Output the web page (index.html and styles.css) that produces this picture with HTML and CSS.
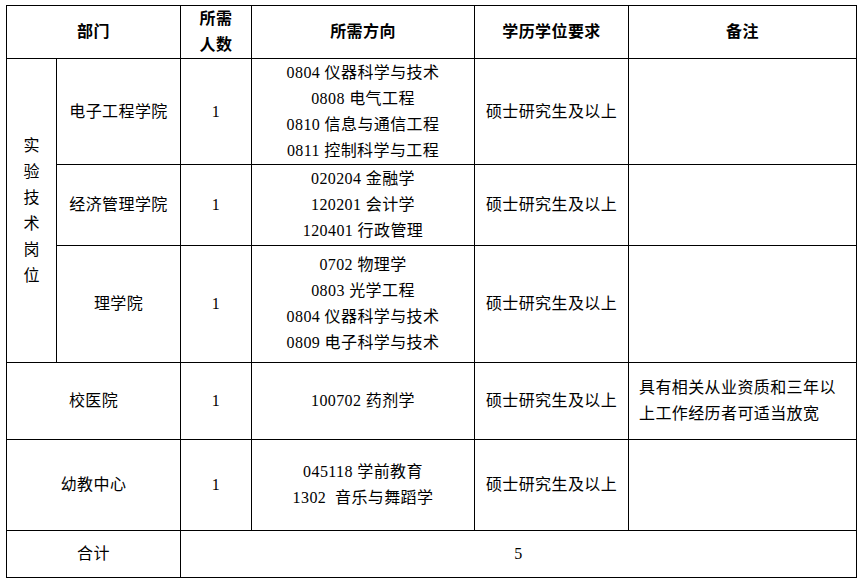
FILE: index.html
```html
<!DOCTYPE html>
<html lang="zh">
<head>
<meta charset="utf-8">
<link rel="stylesheet" href="styles.css">
</head>
<body>
<div class="page">
<table class="grid">
  <colgroup>
    <col class="c1"><col class="c2"><col class="c3"><col class="c4"><col class="c5"><col class="c6">
  </colgroup>
  <tr class="r-head">
    <th colspan="2">部门</th>
    <th>所需<br>人数</th>
    <th>所需方向</th>
    <th>学历学位要求</th>
    <th>备注</th>
  </tr>
  <tr class="r1">
    <td rowspan="3" class="vert"><div class="vtext">实<br>验<br>技<br>术<br>岗<br>位</div></td>
    <td>电子工程学院</td>
    <td>1</td>
    <td>0804 仪器科学与技术<br>0808 电气工程<br>0810 信息与通信工程<br>0811 控制科学与工程</td>
    <td>硕士研究生及以上</td>
    <td></td>
  </tr>
  <tr class="r2">
    <td>经济管理学院</td>
    <td>1</td>
    <td>020204 金融学<br>120201 会计学<br>120401 行政管理</td>
    <td>硕士研究生及以上</td>
    <td></td>
  </tr>
  <tr class="r3">
    <td>理学院</td>
    <td>1</td>
    <td>0702 物理学<br>0803 光学工程<br>0804 仪器科学与技术<br>0809 电子科学与技术</td>
    <td>硕士研究生及以上</td>
    <td></td>
  </tr>
  <tr class="r4">
    <td colspan="2">校医院</td>
    <td>1</td>
    <td>100702 药剂学</td>
    <td>硕士研究生及以上</td>
    <td class="note">具有相关从业资质和三年以<br>上工作经历者可适当放宽</td>
  </tr>
  <tr class="r5">
    <td colspan="2">幼教中心</td>
    <td>1</td>
    <td>045118 学前教育<br>1302&nbsp;&nbsp;音乐与舞蹈学</td>
    <td>硕士研究生及以上</td>
    <td></td>
  </tr>
  <tr class="r6">
    <td colspan="2">合计</td>
    <td colspan="4">5</td>
  </tr>
</table>
</div>
</body>
</html>
```
FILE: styles.css
```css
html, body {
  margin: 0;
  padding: 0;
  background: #ffffff;
}
.page {
  padding: 5px 0 0 6px;
}
.grid {
  border-collapse: collapse;
  table-layout: fixed;
  width: 850px;
  font-family: "Liberation Serif", "Noto Sans CJK SC", serif;
  font-size: 16px;
  line-height: 26px;
  letter-spacing: 0.4px;
  color: #000;
}
.grid th, .grid td {
  border: 1px solid #000;
  padding: 0;
  text-align: center;
  vertical-align: middle;
  white-space: nowrap;
}
.grid th {
  font-weight: bold;
}
.c1 { width: 50px; }
.c2 { width: 124px; }
.c3 { width: 71px; }
.c4 { width: 223px; }
.c5 { width: 154px; }
.c6 { width: 228px; }
.r-head { height: 53px; }
.r1 { height: 106px; }
.r2 { height: 81px; }
.r3 { height: 117px; }
.r4 { height: 77px; }
.r5 { height: 91px; }
.r6 { height: 47px; }
.vtext {
  width: 1em;
  margin: 0 auto;
  line-height: 26px;
}
.grid td.note {
  text-align: left;
  padding-left: 10px;
}
```
